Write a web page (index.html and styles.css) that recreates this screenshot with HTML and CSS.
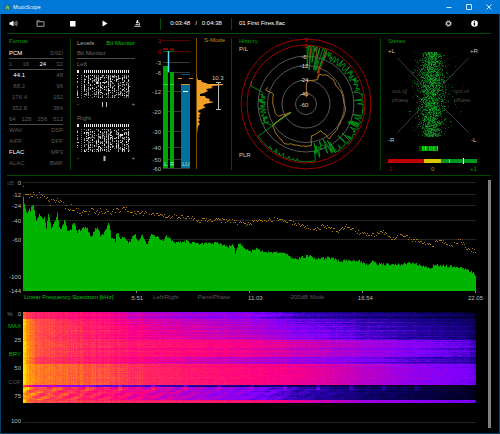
FILE: index.html
```html
<!DOCTYPE html>
<html lang="en">
<head>
<meta charset="utf-8">
<title>MusicScope</title>
<link rel="stylesheet" href="styles.css">
</head>
<body>
<div class="window">
  <header class="titlebar">
    <svg class="app-icon" viewBox="0 0 14 14"><circle cx="7" cy="7" r="6.5" fill="#1d6f72"/><path d="M4 11 6.500 3 9 11M3 7.500h4M9 4v6" fill="none" stroke="#7fd0a0" stroke-width="1.500"/></svg>
    <span class="app-name">MusicScope</span>
    <button class="win-btn" aria-label="Minimize"><svg viewBox="0 0 6 6"><path d="M.500 3.500h5"/></svg></button>
    <button class="win-btn" aria-label="Maximize"><svg viewBox="0 0 6 6"><path d="M.500.500h5v5h-5z"/></svg></button>
    <button class="win-btn" aria-label="Close"><svg viewBox="0 0 6 6"><path d="M.500.500l5 5M5.500.500l-5 5"/></svg></button>
  </header>

  <main class="content">
    <div class="toolbar">
      <div class="transport">
        <button aria-label="Volume"><svg viewBox="0 0 18 14"><path d="M1 4.500h3L9 1v12L4 9.500H1z"/><path d="M11 4.500q1.500 2.500 0 5M13 3q2.500 4 0 8M15 1.500q3.500 5.500 0 11" fill="none" stroke="#ddd" stroke-width="1.200"/></svg></button>
        <button aria-label="Open"><svg viewBox="0 0 18 14"><path d="M2 12.500V1.500h5l1 2h8v9z" fill="none" stroke="#ccc" stroke-width="1.500"/><path d="M2 4h6" stroke="#ccc"/></svg></button>
        <button aria-label="Stop"><svg viewBox="0 0 18 14"><path d="M4 2h11v11H4z"/></svg></button>
        <button aria-label="Play"><svg viewBox="0 0 18 14"><path d="M5 1l10 6-10 6z"/></svg></button>
        <button aria-label="Analyze"><svg viewBox="0 0 18 14"><path d="M8 0l3 1-2 6-3-1zM5 8h6v1.500H5z"/><path d="M11 4q4 4 1 7M3 12.500h12" fill="none" stroke="#eee" stroke-width="1.800"/></svg></button>
      </div>
      <div class="times"><span>0:03:48</span><span>/</span><span>0:04:38</span></div>
      <span class="track">01 First Fires.flac</span>
      <button class="tool" aria-label="Settings"><svg viewBox="0 0 18 18"><circle cx="9" cy="9" r="5" fill="none" stroke="#ccc" stroke-width="3"/><circle cx="9" cy="9" r="7.500" fill="none" stroke="#ccc" stroke-width="2" stroke-dasharray="3 2.890"/></svg></button>
      <button class="tool" aria-label="Information"><svg viewBox="0 0 18 18"><circle cx="9" cy="9" r="8.500"/><path d="M7 8h3.500v6H7zM7.500 3.500h3v3h-3z" fill="#000"/></svg></button>
    </div>

    <div class="monitors">
      <section class="format">
        <h2>Format</h2>
        <div class="row ruled"><b>PCM</b><span>DSD</span></div>
        <div class="row ruled"><span>1</span><span>16</span><b>24</b><span>32</span></div>
        <div class="row rates"><b>44.1</b><span>48</span></div>
        <div class="row rates"><span>88.2</span><span>96</span></div>
        <div class="row rates"><span>176.4</span><span>192</span></div>
        <div class="row rates"><span>352.8</span><span>384</span></div>
        <div class="row ruled"><span>64</span><span>128</span><span>256</span><span>512</span></div>
        <div class="row"><span>WAV</span><span>DSF</span></div>
        <div class="row"><span>AIFF</span><span>DFF</span></div>
        <div class="row"><b>FLAC</b><span>MP3</span></div>
        <div class="row"><span>ALAC</span><span>BWF</span></div>
      </section>

      <section class="levels">
        <div class="tabs"><button>Levels</button><button class="active">Bit Monitor</button></div>
        <div class="row ruled">Bit Monitor</div>
        <div class="row">Left</div>
        <canvas class="bits" width="53" height="28"></canvas>
        <div class="balance"><span>-</span><svg viewBox="0 0 6 5"><path d="M.500 0v5M4.500 0v5"/></svg><span>+</span></div>
        <div class="row">Right</div>
        <canvas class="bits" width="53" height="28"></canvas>
        <div class="balance"><span>-</span><svg viewBox="0 0 6 5"><path d="M2.500 0v5" stroke-width="2"/></svg><span>+</span></div>
      </section>

      <section class="meter">
        <svg viewBox="149 38 82 132">
          <g id="meter-scale"></g>
          <path d="M163 66h5v102h-5zM170 72h4v96h-4z" fill="#00a400"/>
          <path d="M163 84.500h5M170 84.500h4" stroke="#00f000"/>
          <path d="M163 49h5M170 49.500h4" stroke="#900000" stroke-width="2"/>
          <path d="M163 51.500h11" stroke="#006800"/>
          <path d="M168.500 51v21" stroke="#60d8ff" stroke-width="1.500"/>
          <path d="M181 84h9v84h-9z" fill="#00709c"/>
          <path d="M181 74.500h9" stroke="#005c80"/>
          <path d="M181 84.500h9M178 78.500h4M189 78.500h4" stroke="#d88c20"/>
          <path d="M183 91.500h5" stroke="#fff"/>
          <path d="M196.500 38v131" stroke="#805000"/>
          <path d="M197 77L198 80L201 80L202 82L206 83L208 84L223 84L223 85L213 86L211 87L213 88L206 89L208 91L204 93L200 94L200 96L205 96L206 98L210 99L209 101L214 102L210 103L205 104L203 106L206 107L202 109L199 110L198 112L201 113L199 115L200 117L198 118L200 120L198 122L200 124L198 126L197 134z" fill="#f0a028"/>
          <path d="M218.500 83v26M216 82.500h5M216 109.500h5" stroke="#bbb" fill="none"/>
          <g class="bar-names"><text x="164" y="166">L</text><text x="170" y="166">R</text><text x="182" y="166">LU</text></g>
          <text x="204" y="42" class="amber">S-Mode</text>
          <text x="212" y="80" class="bright">10.3</text>
        </svg>
      </section>

      <section class="history">
        <svg viewBox="232 38 148 132">
          <g fill="none" stroke="#585858"><circle cx="306" cy="104" r="48"/><circle cx="306" cy="104" r="38.500"/><circle cx="306" cy="104" r="24"/><circle cx="306" cy="104" r="10.500"/></g>
          <g fill="none" stroke="#a00000"><circle cx="306" cy="104" r="65"/><circle cx="306" cy="104" r="59"/></g>
          <path id="history-green" fill="none" stroke="#00a818" stroke-width=".8"/>
          <path id="history-amber" fill="none" stroke="#c08420" stroke-width=".9"/>
          <path d="M310 45l1 14M316 48l3 27M327 50l-10 28" fill="none" stroke="#b03818" stroke-width=".8"/>
          <text x="239" y="43" class="green">History</text>
          <text x="239" y="51" class="bright">P/L</text>
          <text x="239" y="157" class="bright">PLR</text>
          <g id="history-scale" text-anchor="middle"></g>
        </svg>
      </section>

      <section class="stereo">
        <svg viewBox="381 38 110 132">
          <path d="M397.500 58l26 28M468.500 58l-27 28M397.500 132.500l26-27M468.500 132.500l-27-27" stroke="#383838" fill="none"/>
          <g id="stereo-dots"></g>
          <path d="M388 159h36v4h-36z" fill="#c00000"/><path d="M424 159h17v4h-17z" fill="#d8c800"/><path d="M441 159h36v4h-36z" fill="#009818"/>
          <path d="M449.500 159v4" stroke="#70d070"/><path d="M463.500 158v6" stroke="#fff"/>
          <text x="388" y="43" class="green">Stereo</text>
          <g class="bright"><text x="388" y="53">+L</text><text x="470" y="53">+R</text><text x="388" y="142">-R</text><text x="471" y="142">-L</text></g>
          <g class="dim"><text x="392" y="93">out of</text><text x="392" y="102">phase</text><text x="454" y="93">out of</text><text x="454" y="102">phase</text></g>
          <g class="correlation"><text x="387" y="171" class="negative">-1</text><text x="431" y="171" class="neutral">0</text><text x="470" y="171" class="green">+1</text></g>
        </svg>
      </section>
    </div>

    <div class="analysis">
      <div class="charts">
        <div class="chart">
          <svg class="axis" viewBox="7 180 16 114"><text x="7" y="185" class="dim">dB</text><g id="db-scale" text-anchor="end"></g></svg>
          <svg class="plot" viewBox="0 180 453 114" preserveAspectRatio="none">
            <g id="db-lines" stroke="#242424"></g>
            <path id="spectrum-fill" fill="#00b400"/>
            <path id="spectrum-peaks" stroke="#a87408" fill="none"/>
            <path d="M113.500 291v2M226.500 291v2M339.500 291v2M452.500 291v2" stroke="#888"/>
          </svg>
        </div>
        <div class="freq">
          <div><button class="mode active">Linear Frequency Spectrum [kHz]</button><span>5.51</span></div>
          <div class="pair"><button class="mode">Left/Right</button><button class="mode">Pans/Phase</button><span>11.03</span></div>
          <div class="single"><button class="mode">-200dB Mode</button><span>16.54</span></div>
          <div><span>22.05</span></div>
        </div>
        <div class="chart">
          <div class="percent">
            <div><i>%</i>0</div><button class="active">MAX</button><div>25</div><button class="active">BRY</button><div>50</div><button>COF</button><div>75</div><div class="last">100</div>
          </div>
          <div class="heat"><canvas id="heat" width="453" height="91"></canvas></div>
        </div>
      </div>
      <div class="scrollbar"></div>
    </div>
  </main>
</div>
<script src="main.js"></script>
</body>
</html>
```
FILE: styles.css
```css
* { box-sizing: border-box; }
body {
  margin: 0;
  background: #000;
  color: #5a5a5a;
  font: 6px/11px "Liberation Sans", Arial, sans-serif;
}
svg, canvas { display: block; }
button {
  padding: 0;
  border: 0;
  background: none;
  color: inherit;
  font: inherit;
}
text { fill: #bbb; font-size: 6px; }
.window {
  min-height: 100vh;
  border: 1px solid #00406e;
  border-top: 0;
}
.titlebar {
  display: flex;
  align-items: center;
  height: 14px;
  margin: 0 -1px;
  padding: 0 8px 0 4px;
  gap: 14px;
  background: #0078d7;
  color: #fff;
}
.app-icon { width: 7px; height: 7px; margin-right: -12px; }
.app-name { flex: 1; font: 5px/14px "Open Sans", sans-serif; }
.win-btn svg { width: 6px; height: 6px; fill: none; stroke: #cfe4f6; }
.content { padding: 0 8px 0 6px; }

.toolbar {
  display: flex;
  align-items: center;
  height: 20px;
  border-bottom: 1px solid #004c00;
  color: #fff;
}
.toolbar svg { width: 9px; height: 7px; fill: #fff; }
.transport {
  display: grid;
  grid-template-columns: 13px 40px 24px 41px 25px;
  justify-items: center;
  width: 153px;
}
.times {
  display: flex;
  justify-content: center;
  gap: 5px;
  width: 72px;
  height: 12px;
  border: solid #004c00;
  border-width: 0 1px;
}
.track { flex: 1; padding-left: 7px; }
.tool { width: 26px; }
.tool:last-child { margin-right: 4px; }
.tool svg { width: 7px; height: 7px; margin: auto; }

.monitors {
  display: grid;
  grid-template-columns: 64fr 78fr 83fr 149fr 110fr;
  padding: 4px 0 5px;
  border-bottom: 1px solid #004400;
}
.monitors svg { overflow: visible; }
.format, .meter, .history { border-right: 1px solid #004400; }
.format { padding: 0 7px 0 2px; }
h2, .tabs { height: 10px; margin: 0; font: 6px/7px "Liberation Sans", Arial, sans-serif; }
h2 { color: #00a000; }
.row {
  display: flex;
  justify-content: space-between;
  height: 11px;
}
.ruled { border-bottom: 1px solid #4c4c4c; }
.rates { padding-left: 3px; }
.rates :first-child { width: 13px; text-align: right; }
.row b { color: #fff; font-weight: normal; }
.levels { padding: 0 14px 0 6px; }
.levels .row { color: #6c6c6c; }
.tabs { display: flex; justify-content: space-between; color: #aaa; }
.active { color: #00c000; }
.bits { width: 53px; height: 28px; }
.balance {
  display: flex;
  align-items: center;
  justify-content: space-between;
  height: 12px;
  color: #999;
}
.balance + .row { margin-top: 3px; }
.balance svg { width: 6px; height: 5px; stroke: #bbb; }
.amber { fill: #c88418; }
.green { fill: #00a000; }
.negative { fill: #b00000; }
.neutral { fill: #b0a000; }
.bright, .bright text { fill: #ccc; }
.dim, .dim text { fill: #484848; }
.bar-names text { fill: #b8e0c0; }

.analysis { display: flex; justify-content: space-between; gap: 12px; padding-top: 4px; }
.charts { flex: 1; }
.chart { display: flex; }
.axis { flex: none; width: 16px; height: 114px; overflow: visible; }
.plot { flex: 1; min-width: 0; height: 114px; }
.freq {
  display: grid;
  grid-template-columns: repeat(4, 1fr);
  height: 16px;
  padding-left: 16px;
  color: #bbb;
  line-height: 8px;
}
.freq div { display: flex; align-items: flex-start; gap: 18px; white-space: nowrap; }
.freq span { margin: 0 -7px 0 auto; }
.mode { margin-left: 1px; color: #5a5a5a; line-height: 6px; }
.mode.active { color: #00c000; }
.freq .pair { padding-left: 16px; }
.freq .single { padding-left: 32px; }
.percent {
  display: grid;
  grid-template-rows: 9px repeat(6, 14px) 9px;
  align-items: center;
  justify-items: end;
  width: 16px;
  padding-right: 2px;
  color: #bbb;
  line-height: 9px;
}
.percent div:first-child { display: flex; gap: 5px; }
.percent i { color: #777; font-style: normal; }
.percent button { color: #555; }
.percent .active { color: #00b000; }
.percent .last { margin-top: 28px; }
.heat { flex: 1; height: 111px; margin-top: 2px; border-bottom: 1px solid #242424; }
.heat canvas { width: 100%; height: 91px; }
.scrollbar { width: 4px; height: 248px; background: #808080; }
```
FILE: main.js
```js
let seed = 12345;
function rnd() {
  seed = (seed * 1103515245 + 12345) % 2147483648;
  return seed / 2147483648;
}
function interpolate(points, x) {
  if (x <= points[0][0]) return points[0][1];
  for (let i = 1; i < points.length; i++) {
    const [x1, y1] = points[i];
    const [x0, y0] = points[i - 1];
    if (x <= x1) return y0 + (y1 - y0) * (x - x0) / (x1 - x0);
  }
  return points[points.length - 1][1];
}
const byId = id => document.getElementById(id);

// Level meter scale
byId('meter-scale').innerHTML = [['3', 40], ['0', 51], ['-3', 62], ['-6', 72], ['-12', 91], ['-20', 111], ['-30', 131], ['-40', 147], ['-50', 159], ['-60', 168]]
  .map(([t, y], i) => `<path d="M163 ${y + 0.5}h27" stroke="${i < 2 ? '#580000' : '#383838'}"/><text x="161" y="${y + 3}" text-anchor="end" style="fill:${i < 2 ? '#c00000' : '#bbb'}">${t}</text>`).join('');

// Bit monitors
document.querySelectorAll('.bits').forEach(canvas => {
  const c = canvas.getContext('2d');
  for (let i = 0; i < 24; i++) {
    const x = i === 0 ? 0 : 5 + i * 2;
    const density = i % 5 === 3 ? 0.9 : 0.45 + rnd() * 0.25;
    c.fillStyle = '#eee';
    c.fillRect(x, 0, i === 0 ? 2 : 1, 3);
    for (let y = 5; y < 28; y++) {
      if (rnd() < density) {
        const g = Math.round(90 + rnd() * 150);
        c.fillStyle = `rgb(${g},${g},${g})`;
        c.fillRect(x, y, 1, 1);
        if (rnd() < 0.12) c.fillRect(x + 1, y, 1, 1);
      }
    }
  }
  for (let y = 5; y < 28; y += 2) { c.fillStyle = '#777'; c.fillRect(4, y, 1, 1); }
});

// Polar history
function polar(a, r) {
  const t = a * Math.PI / 180;
  return `${(306 + r * Math.sin(t)).toFixed(1)} ${(104 - r * Math.cos(t)).toFixed(1)}`;
}
const trace = [];
for (let a = 1; a < 235; a += 0.8) {
  let depth;
  if (a < 22) depth = rnd() < 0.5 ? 28 * rnd() : 0;
  else if (a < 80) depth = 9 * rnd();
  else if (a < 148) depth = rnd() < 0.2 ? 13 * rnd() : 2 * rnd();
  else if (a < 170) depth = 20 * rnd();
  else depth = rnd() < 0.12 ? 5 * rnd() : 0.5;
  trace.push(polar(a, 58 - depth));
}
trace.push(polar(236, 58), polar(241, 17), polar(238, 40));
for (let a = 243; a < 284; a += 0.9) trace.push(polar(a, 40 + rnd() * 8));
trace.push(polar(286, 47), polar(288, 58), polar(293, 59));
byId('history-green').setAttribute('d', 'M' + trace.join('L'));
const amber = [[229,190],[229,150],[233,141],[262,137],[268,122],[290,124],[310,136],[318,155],[332,170],[340,195],[346,225],[342,245],[330,270],[318,290],[298,315],[285,300],[270,290],[255,302],[245,305],[244,335],[215,337],[185,330],[165,330],[150,315],[138,300],[128,275],[150,255],[182,236],[145,247],[135,235],[128,200],[130,180],[107,168],[112,160]];
const amberPath = [];
amber.forEach(([x, y], i) => {
  if (i > 4) {
    const [px, py] = amber[i - 1];
    for (let k = 1; k < 4; k++) amberPath.push([(px + (x - px) * k / 4) / 3 + 229.5 + rnd(), (py + (y - py) * k / 4) / 3 + 33.5 + rnd()]);
  }
  amberPath.push([x / 3 + 230, y / 3 + 34]);
});
byId('history-amber').setAttribute('d', 'M' + amberPath.map(p => p.map(v => v.toFixed(1)).join(' ')).join('L'));
byId('history-scale').innerHTML = [['3', 40], ['0', 46], ['-6', 57], ['-12', 66], ['-24', 80], ['-40', 94], ['-60', 105]]
  .map(([t, y], i) => `<text x="${i < 2 ? 306 : 304}" y="${y + 2}" style="fill:${i < 2 ? '#e00000' : '#ddd'}">${t}</text>`).join('');

// Stereo field
let dots = '';
for (let i = 0; i < 3000; i++) {
  const y = 52 + rnd() * 85;
  const edge = Math.sin((y - 48) / 93 * Math.PI);
  const u = rnd() + rnd() + rnd() + rnd() - 2;
  const x = 432 + u * (rnd() < 0.25 ? 16 : 9) * (0.7 + 0.5 * edge);
  dots += `<path d="M${Math.floor(x)} ${Math.floor(y)}h1v1h-1z" fill="rgb(20,${Math.round(120 + rnd() * 110)},40)" opacity="${(0.15 + rnd() * 0.45).toFixed(2)}"/>`;
}
for (let x = 419; x < 438; x++) dots += `<path d="M${x} 146h1v5h-1z" fill="rgb(0,${x < 422 ? 70 : Math.round(100 + rnd() * 150)},0)"/>`;
byId('stereo-dots').innerHTML = dots;

// Frequency spectrum
const levels = [['0', 182], ['-12', 194], ['-24', 205], ['-40', 220], ['-60', 239], ['-100', 276], ['-144', 291]];
byId('db-scale').innerHTML = levels.map(([t, y]) => `<text x="21" y="${Math.min(y, 290) + 3}">${t}</text>`).join('');
byId('db-lines').innerHTML = levels.slice(0, 5).map(l => `<path d="M0 ${l[1] + 0.5}h453"/>`).join('');
const fill = [[69,75],[74,100],[78,122],[90,112],[100,95],[108,150],[117,130],[133,140],[138,175],[145,120],[152,170],[163,150],[171,118],[178,175],[193,145],[205,185],[222,150],[230,185],[245,165],[262,170],[270,195],[292,162],[300,190],[318,175],[325,150],[333,195],[345,205],[349,178],[360,195],[390,210],[403,185],[415,212],[425,190],[440,218],[453,190],[470,192],[485,210],[498,190],[520,212],[560,208],[590,217],[650,212],[680,225],[700,220],[705,240],[715,215],[750,240],[770,230],[800,242],[830,238],[860,250],[885,262],[925,250],[950,262],[985,256],[1015,266],[1080,268],[1105,283],[1115,262],[1130,276],[1200,278],[1235,272],[1290,290],[1300,278],[1370,285],[1400,293],[1420,305],[1428,318]];
const peaks = [[69,35],[75,65],[120,68],[130,75],[150,92],[180,85],[200,102],[240,118],[300,115],[340,118],[380,112],[400,127],[440,122],[500,132],[560,133],[600,145],[650,142],[690,145],[730,155],[750,153],[770,145],[830,140],[870,150],[950,170],[970,158],[1010,178],[1040,160],[1070,180],[1120,188],[1145,175],[1180,200],[1210,185],[1230,200],[1300,217],[1315,200],[1335,210],[1345,222],[1380,205],[1400,228],[1425,238]];
let area = 'M0 291', marks = '';
for (let x = 0; x < 453; x++) {
  const z = (x + 23) * 3;
  const y = interpolate(fill, z) / 3 + 172 + (rnd() - 0.5) * (x < 110 ? 4 : 3);
  area += `L${x} ${y.toFixed(1)}L${x + 1} ${y.toFixed(1)}`;
  const spread = x < 120 ? 7 : 4;
  const py = Math.round(interpolate(peaks, z) / 3 + 172 + (rnd() - 0.5) * spread);
  if (rnd() < 0.85) marks += `M${x} ${py + 0.5}h1`;
}
byId('spectrum-fill').setAttribute('d', area + 'L453 291z');
byId('spectrum-peaks').setAttribute('d', marks);

// Sonogram: each band is [bottom row, level at x stops]
const stops = [69, 85, 110, 300, 450, 600, 750, 900, 1100, 1250, 1400, 1428];
const bands = [
  [7, [.8, .75, .7, .62, .48, .42, .39, .27, .2, .16, .1, .06]],
  [22, [.97, .9, .79, .67, .55, .51, .45, .35, .27, .22, .16, .1]],
  [28, [.97, .9, .79, .67, .58, .54, .5, .4, .3, .24, .18, .1]],
  [45, [1, .92, .8, .7, .65, .62, .58, .52, .43, .37, .3, .24]],
  [52, [.98, .9, .75, .65, .56, .51, .46, .4, .33, .27, .22, .16]],
  [73, [1, .94, .87, .8, .71, .66, .62, .58, .48, .4, .35, .32]],
  [75, [.8, .6, .45, .33, .3, .22, .18, .14, .1, .08, .06, .04]],
  [88, [.95, .88, .8, .68, .55, .45, .37, .26, .15, .1, .05, .03]],
  [91, [1, .85, .78, .72, .68, .66, .63, .55, .42, .38, .34, .3]]
];
const colors = [[0, 0, 0, 0], [.12, 8, 0, 90], [.24, 40, 0, 170], [.35, 125, 0, 255], [.47, 180, 0, 205], [.6, 255, 0, 130], [.72, 255, 40, 95], [.82, 255, 95, 50], [.92, 255, 150, 10], [1, 255, 225, 0]];
const channels = [1, 2, 3].map(k => colors.map(c => [c[0], c[k]]));
const heat = byId('heat').getContext('2d');
const image = heat.createImageData(453, 91);
const columns = Array.from({ length: 453 }, () => rnd() - 0.5);
for (let y = 0; y < 91; y++) {
  const index = bands.findIndex(b => y < b[0]);
  const curve = stops.map((s, i) => [s, bands[index][1][i]]);
  const rowShift = (rnd() - 0.5) * (index === 5 || index === 7 ? 0.04 : 0.09);
  let grain = 0;
  for (let x = 0; x < 453; x++) {
    if (x % 3 === 0) grain = (rnd() - 0.5) * 0.05;
    const base = interpolate(curve, (x + 23) * 3);
    let v = base + rowShift * Math.min(1, x / 80) + grain + columns[x] * (x < 120 ? 0.06 : 0.02);
    if (index === 7) v += Math.sin(x * 0.4 + Math.floor(y / 3) * 2) * 0.07 * base + Math.sin(x * 0.19 + y) * 0.05 * base;
    if (index > 5 && index < 8 && y < 78 && x % 33 > 28 && x < 400) v += 0.1;
    v = Math.max(0, Math.min(1, v));
    const p = (y * 453 + x) * 4;
    for (let k = 0; k < 3; k++) image.data[p + k] = interpolate(channels[k], v);
    image.data[p + 3] = 255;
  }
}
heat.putImageData(image, 0, 0);
```
